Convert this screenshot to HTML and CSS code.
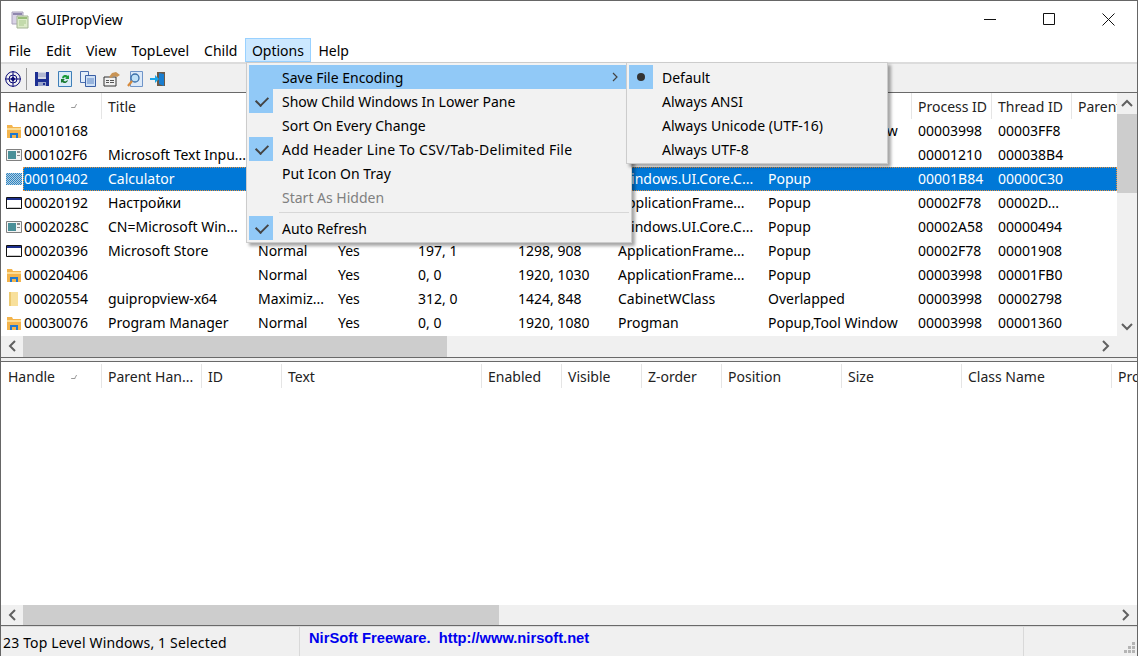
FILE: index.html
```html
<!DOCTYPE html>
<html>

<head>
    <title>GUIPropView</title>
    <meta name="viewport" content="width=device-width, initial-scale=1.0">
    <link rel="stylesheet" href="styles.css">
</head>

<body>
    <svg class="defs" width="0" height="0">
        <defs>
            <pattern id="dots" width="2" height="2" patternUnits="userSpaceOnUse">
                <rect width="2" height="2" fill="#2a86c8"/>
                <rect width="1" height="1" fill="#b9cfdd"/>
                <rect x="1" y="1" width="1" height="1" fill="#b9cfdd"/>
            </pattern>
        </defs>
        <symbol id="i-folder" viewBox="0 0 16 16">
            <path d="M1 2h5l1 2h8v11H1z" fill="#f3b44c"/>
            <path d="M1 5h14v2H1z" fill="#fbdc94"/>
            <path d="M4 15v-5h8v5h-2v-3H6v3z" fill="#1e78d0"/>
        </symbol>
        <symbol id="i-folder-pale" viewBox="0 0 16 16">
            <path d="M3 1h9v14H3z" fill="#f8e09c"/>
            <path d="M3 1h2v14H3z" fill="#ecc970"/>
        </symbol>
        <symbol id="i-app" viewBox="0 0 16 16">
            <path d="M.5 2.500h15v11H.5z" fill="#f4f4f4" stroke="#808080"/>
            <path d="M2 4h8v8H2z" fill="#4a8f98"/>
            <path d="M11 4h3v2h-3zM11 8h3v1h-3z" fill="#8a8a8a"/>
        </symbol>
        <symbol id="i-win" viewBox="0 0 16 16">
            <path d="M.5 2.500h15v11H.5z" fill="#fff" stroke="#111"/>
            <path d="M1 3h14v2H1z" fill="#1c2f8c"/>
            <path d="M2 12h12v1H2z" fill="#c8c8c8"/>
        </symbol>
        <symbol id="i-dither" viewBox="0 0 16 16">
            <path d="M0 2h16v12H0z" fill="url(#dots)"/>
        </symbol>
    </svg>

    <div class="window">
        <div class="titlebar">
            <svg class="app-icon" width="18" height="18" viewBox="0 0 18 18">
                <path d="M1 1h11v12H1z" fill="#d9d3e6" stroke="#a9a2bb"/>
                <path d="M2 2h9v2H2z" fill="#8f86ad"/>
                <path d="M6 5h11v12H6z" fill="#dcebc8" stroke="#a3b394"/>
                <path d="M7 6h9v2H7z" fill="#98bd78"/>
                <path d="M8 10h7M8 12h7M8 14h5" stroke="#a9c98e"/>
            </svg>
            <span class="title">GUIPropView</span>
            <div class="win-controls">
                <svg width="13" height="13" viewBox="0 0 13 13"><path d="M0 6.500h12" stroke="#111"/></svg>
                <svg width="13" height="13" viewBox="0 0 13 13"><path d="M.5.500h11v11H.5z" fill="none" stroke="#111"/></svg>
                <svg width="13" height="13" viewBox="0 0 13 13"><path d="M.5.500l12 12M12.500.500l-12 12" stroke="#111"/></svg>
            </div>
        </div>

        <div class="menubar">
            <span class="menu-item">File</span>
            <span class="menu-item">Edit</span>
            <span class="menu-item">View</span>
            <span class="menu-item">TopLevel</span>
            <span class="menu-item">Child</span>
            <span class="menu-item active">Options</span>
            <span class="menu-item">Help</span>
        </div>

        <div class="toolbar">
            <svg class="tool" width="16" height="16" viewBox="0 0 16 16" fill="none" stroke="#0a0a78">
                <circle cx="8" cy="8" r="7.300"/><circle cx="8" cy="8" r="4"/>
                <path d="M8 0v16M0 8h16"/><circle cx="8" cy="8" r="1.500" fill="#0a0a78"/>
            </svg>
            <span class="tool-sep"></span>
            <svg class="tool" width="16" height="16" viewBox="0 0 16 16">
                <path d="M1 1h14v14H1z" fill="#1d2f92"/>
                <path d="M4 1h8v7H4z" fill="#d5d8e6"/>
                <path d="M4 3h8M4 5h8" stroke="#8d96bd"/>
                <path d="M4 11h8v4H4z" fill="#9aa4c9"/>
                <path d="M9 12h2v2H9z" fill="#1d2f92"/>
            </svg>
            <svg class="tool" width="16" height="16" viewBox="0 0 16 16">
                <path d="M1.500.500h13v15h-13z" fill="#dcecf8" stroke="#3f7fb8"/>
                <path d="M5 7a3.500 3.500 0 0 1 6-2l1-1v4H8l1.500-1.300A2 2 0 0 0 6.500 7.500z" fill="#1a9a3a"/>
                <path d="M11 9a3.500 3.500 0 0 1-6 2l-1 1V8h4l-1.500 1.300a2 2 0 0 0 3 .5z" fill="#1a7a30"/>
            </svg>
            <svg class="tool" width="16" height="16" viewBox="0 0 16 16">
                <path d="M.5.500h8v11h-8z" fill="#e4eefa" stroke="#4a6fb0"/>
                <path d="M5.500 4.500h10v11h-10z" fill="#cfe0f5" stroke="#3a5fa5"/>
                <path d="M7 8h7M7 10h7M7 12h7" stroke="#5f86c4"/>
            </svg>
            <svg class="tool" width="17" height="16" viewBox="0 0 17 16">
                <path d="M1 6h12v9H1z" fill="#f1f1f1" stroke="#333"/>
                <path d="M3 9h3v1H3zM3 11h3v1H3zM7 9h4v1H7zM7 11h4v1H7z" fill="#555"/>
                <path d="M6 6l3-4 4-1 4 3-3 2-3-1-3 2z" fill="#c99455"/>
            </svg>
            <svg class="tool" width="16" height="16" viewBox="0 0 16 16">
                <path d="M3.500.500h12v15h-12z" fill="#dce9f8" stroke="#6f94c8"/>
                <circle cx="8" cy="7" r="4" fill="#bfe0f7" stroke="#3a6ea8" stroke-width="1.300"/>
                <path d="M5 10l-4 5" stroke="#d68a3c" stroke-width="2.200"/>
            </svg>
            <svg class="tool" width="16" height="16" viewBox="0 0 16 16">
                <path d="M7 1h8v14H7z" fill="#6b5a48"/>
                <path d="M9 2l5 1v12l-5-2z" fill="#1a7ed0"/>
                <path d="M0 7h5V4l4 4-4 4V9H0z" fill="#1ca6ea"/>
            </svg>
        </div>

        <div class="pane pane-top">
            <div class="list">
                <div class="list-head cols-top">
                    <span class="head-cell">Handle<i class="sort-mark"></i></span>
                    <span class="head-cell">Title</span>
                    <span class="head-cell"></span>
                    <span class="head-cell"></span>
                    <span class="head-cell"></span>
                    <span class="head-cell"></span>
                    <span class="head-cell"></span>
                    <span class="head-cell"></span>
                    <span class="head-cell">Process ID</span>
                    <span class="head-cell">Thread ID</span>
                    <span class="head-cell">Parent</span>
                </div>
                <div class="rows">
                    <div class="row">
                        <svg class="row-icon" width="16" height="16"><use href="#i-folder"/></svg>
                        <div class="cells cols-top-body"><span>00010168</span><span></span><span></span><span></span><span></span><span></span><span></span><span>Popup,Tool Window</span><span>00003998</span><span>00003FF8</span></div>
                    </div>
                    <div class="row">
                        <svg class="row-icon" width="16" height="16"><use href="#i-app"/></svg>
                        <div class="cells cols-top-body"><span>000102F6</span><span>Microsoft Text Inpu...</span><span></span><span></span><span></span><span></span><span></span><span></span><span>00001210</span><span>000038B4</span></div>
                    </div>
                    <div class="row selected">
                        <svg class="row-icon" width="16" height="16"><use href="#i-dither"/></svg>
                        <div class="cells cols-top-body"><span>00010402</span><span>Calculator</span><span></span><span></span><span></span><span></span><span>Windows.UI.Core.C...</span><span>Popup</span><span>00001B84</span><span>00000C30</span></div>
                    </div>
                    <div class="row">
                        <svg class="row-icon" width="16" height="16"><use href="#i-win"/></svg>
                        <div class="cells cols-top-body"><span>00020192</span><span>Настройки</span><span></span><span></span><span></span><span></span><span>ApplicationFrame...</span><span>Popup</span><span>00002F78</span><span>00002D...</span></div>
                    </div>
                    <div class="row">
                        <svg class="row-icon" width="16" height="16"><use href="#i-app"/></svg>
                        <div class="cells cols-top-body"><span>0002028C</span><span>CN=Microsoft Win...</span><span></span><span></span><span></span><span></span><span>Windows.UI.Core.C...</span><span>Popup</span><span>00002A58</span><span>00000494</span></div>
                    </div>
                    <div class="row">
                        <svg class="row-icon" width="16" height="16"><use href="#i-win"/></svg>
                        <div class="cells cols-top-body"><span>00020396</span><span>Microsoft Store</span><span>Normal</span><span>Yes</span><span>197, 1</span><span>1298, 908</span><span>ApplicationFrame...</span><span>Popup</span><span>00002F78</span><span>00001908</span></div>
                    </div>
                    <div class="row">
                        <svg class="row-icon" width="16" height="16"><use href="#i-folder"/></svg>
                        <div class="cells cols-top-body"><span>00020406</span><span></span><span>Normal</span><span>Yes</span><span>0, 0</span><span>1920, 1030</span><span>ApplicationFrame...</span><span>Popup</span><span>00003998</span><span>00001FB0</span></div>
                    </div>
                    <div class="row">
                        <svg class="row-icon" width="16" height="16"><use href="#i-folder-pale"/></svg>
                        <div class="cells cols-top-body"><span>00020554</span><span>guipropview-x64</span><span>Maximiz...</span><span>Yes</span><span>312, 0</span><span>1424, 848</span><span>CabinetWClass</span><span>Overlapped</span><span>00003998</span><span>00002798</span></div>
                    </div>
                    <div class="row">
                        <svg class="row-icon" width="16" height="16"><use href="#i-folder"/></svg>
                        <div class="cells cols-top-body"><span>00030076</span><span>Program Manager</span><span>Normal</span><span>Yes</span><span>0, 0</span><span>1920, 1080</span><span>Progman</span><span>Popup,Tool Window</span><span>00003998</span><span>00001360</span></div>
                    </div>
                </div>
            </div>
            <div class="vscroll">
                <svg class="sb-btn" width="20" height="21" viewBox="0 0 20 21"><path d="M5 13l5-5 5 5" fill="none" stroke="#606060" stroke-width="2"/></svg>
                <div class="vthumb"></div>
                <div class="sb-fill"></div>
                <svg class="sb-btn" width="20" height="21" viewBox="0 0 20 21"><path d="M5 9l5 5 5-5" fill="none" stroke="#606060" stroke-width="2"/></svg>
            </div>
            <div class="hscroll">
                <svg class="sb-btn" width="22" height="20" viewBox="0 0 22 20"><path d="M14 5l-5 5 5 5" fill="none" stroke="#606060" stroke-width="2"/></svg>
                <div class="hthumb hthumb-top"></div>
                <div class="sb-fill"></div>
                <svg class="sb-btn" width="21" height="20" viewBox="0 0 21 20"><path d="M7 5l5 5-5 5" fill="none" stroke="#606060" stroke-width="2"/></svg>
            </div>
            <div class="corner"></div>
        </div>

        <div class="splitter"></div>

        <div class="pane pane-bottom">
            <div class="list">
                <div class="list-head cols-bottom">
                    <span class="head-cell">Handle<i class="sort-mark"></i></span>
                    <span class="head-cell">Parent Han...</span>
                    <span class="head-cell">ID</span>
                    <span class="head-cell">Text</span>
                    <span class="head-cell">Enabled</span>
                    <span class="head-cell">Visible</span>
                    <span class="head-cell">Z-order</span>
                    <span class="head-cell">Position</span>
                    <span class="head-cell">Size</span>
                    <span class="head-cell">Class Name</span>
                    <span class="head-cell">Process ID</span>
                </div>
            </div>
            <div class="hscroll">
                <svg class="sb-btn" width="22" height="20" viewBox="0 0 22 20"><path d="M14 5l-5 5 5 5" fill="none" stroke="#606060" stroke-width="2"/></svg>
                <div class="hthumb hthumb-bottom"></div>
                <div class="sb-fill"></div>
                <svg class="sb-btn" width="21" height="20" viewBox="0 0 21 20"><path d="M7 5l5 5-5 5" fill="none" stroke="#606060" stroke-width="2"/></svg>
            </div>
        </div>

        <div class="statusbar">
            <div class="status-count">23 Top Level Windows, 1 Selected</div>
            <div class="status-link">NirSoft Freeware.&nbsp; http://www.nirsoft.net</div>
            <div class="status-grip">
                <svg width="12" height="12" viewBox="0 0 12 12" fill="#b5b5b5"><path d="M9 0h3v3H9zM5 4h3v3H5zM9 4h3v3H9zM1 8h3v3H1zM5 8h3v3H5zM9 8h3v3H9z"/></svg>
            </div>
        </div>

        <!-- open menus -->
        <div class="popup options-menu">
            <div class="pop-item current">Save File Encoding
                <svg class="pop-arrow" width="7" height="10" viewBox="0 0 7 10"><path d="M1 1l4 4-4 4" fill="none" stroke="#444" stroke-width="1.200"/></svg>
            </div>
            <div class="pop-item checked">Show Child Windows In Lower Pane</div>
            <div class="pop-item">Sort On Every Change</div>
            <div class="pop-item checked wide">Add Header Line To CSV/Tab-Delimited File</div>
            <div class="pop-item">Put Icon On Tray</div>
            <div class="pop-item disabled">Start As Hidden</div>
            <div class="pop-sep"></div>
            <div class="pop-item checked">Auto Refresh</div>
        </div>
        <div class="popup encoding-menu">
            <div class="pop-item radio">Default</div>
            <div class="pop-item">Always ANSI</div>
            <div class="pop-item">Always Unicode (UTF-16)</div>
            <div class="pop-item">Always UTF-8</div>
        </div>
    </div>
</body>
</html>
```

FILE: styles.css
```css
* {
    box-sizing: border-box;
}

html,
body {
    margin: 0;
    height: 100%;
    overflow: hidden;
}

body {
    font-family: "Noto Sans", sans-serif;
    font-size: 14px;
    color: #000;
    background-color: #fff;
}

.defs {
    position: absolute;
}

.window {
    position: relative;
    display: flex;
    flex-direction: column;
    height: 656px;
    border: 1px solid #666;
    border-bottom: none;
    background-color: #fff;
}

.titlebar {
    display: flex;
    align-items: center;
    height: 37px;
    padding-left: 10px;
}

.title {
    margin-left: 7px;
}

.win-controls {
    display: flex;
    gap: 46px;
    margin-left: auto;
    margin-right: 22px;
}

.menubar {
    display: flex;
    height: 24px;
}

.menu-item {
    display: flex;
    align-items: center;
    padding: 0 6.5px;
    border: 1px solid transparent;
}

.menu-item.active {
    padding: 0 6px;
    background-color: #cce8ff;
    border-color: #99d1ff;
}

.toolbar {
    display: flex;
    align-items: center;
    height: 30px;
    padding: 2px 0 0 4px;
    border-top: 2px solid #dcdcdc;
    background-color: #f0f0f0;
}

.tool {
    margin-right: 7px;
}

.tool-sep {
    width: 1px;
    height: 22px;
    margin: 0 7px 0 -2px;
    background-color: #999;
}

.pane {
    display: grid;
    height: 266px;
    border-top: 1px solid #696969;
    border-bottom: 1px solid #696969;
    grid-template-columns: 1fr 20px;
    grid-template-rows: 1fr 21px;
    overflow: hidden;
}

.pane-bottom {
    height: 265px;
    grid-template-columns: 1fr;
    grid-template-rows: 1fr 20px;
}

.pane-bottom .list-head {
    padding-top: 2px;
}

.splitter {
    height: 3px;
    background-color: #f0f0f0;
}

.list {
    min-width: 0;
    overflow: hidden;
}

.list-head {
    display: grid;
    height: 26px;
    padding-left: 1px;
}

.cols-top {
    grid-template-columns: 100px 150px 80px 80px 100px 100px 150px 150px 80px 80px 80px;
}

.cols-bottom {
    grid-template-columns: 100px 100px 80px 200px 80px 80px 80px 120px 120px 150px 80px;
}

.cols-top-body {
    grid-template-columns: 79px 150px 80px 80px 100px 100px 150px 150px 80px 80px 80px;
}

.head-cell {
    position: relative;
    display: flex;
    align-items: center;
    padding-left: 6px;
    white-space: nowrap;
    overflow: hidden;
    color: #222;
    border-right: 1px solid #e5e5e5;
}

.sort-mark {
    position: absolute;
    left: 70px;
    top: 11px;
    width: 4px;
    height: 4px;
    border-right: 1px solid #999;
    border-bottom: 1px solid #999;
    transform: skewX(-30deg);
}

.row {
    display: flex;
    align-items: center;
    height: 24px;
}

.row-icon {
    flex: none;
    margin: 0 1px 0 5px;
}

.cells {
    display: grid;
    flex: 1;
    height: 24px;
    padding-bottom: 1px;
    align-items: center;
    white-space: nowrap;
    overflow: hidden;
}

.cells span {
    padding-left: 6px;
    overflow: hidden;
}

.cells span:first-child {
    padding-left: 1px;
}

.row.selected .cells {
    color: #fff;
    background-color: #0078d7;
    outline: 1px dotted #e8903a;
    outline-offset: -1px;
}

.vscroll,
.hscroll {
    display: flex;
    background-color: #f0f0f0;
}

.vscroll {
    flex-direction: column;
}

.sb-btn {
    flex: none;
}

.sb-fill {
    flex: 1;
}

.vthumb {
    height: 79px;
    background-color: #cdcdcd;
}

.hthumb {
    background-color: #cdcdcd;
}

.hthumb-top {
    width: 424px;
}

.hthumb-bottom {
    width: 476px;
}

.corner {
    background-color: #f0f0f0;
}

.statusbar {
    display: flex;
    flex: 1;
    border-top: 1px solid #dcdcdc;
    background-color: #f0f0f0;
}

.status-count {
    width: 299px;
    padding: 6px 0 0 2px;
    white-space: nowrap;
    letter-spacing: 0.16px;
    border-right: 1px solid #d9d9d9;
}

.status-link {
    width: 724px;
    padding: 3px 0 0 9px;
    font-family: "Liberation Sans", Arial, sans-serif;
    font-size: 14.7px;
    font-weight: bold;
    color: #0000ee;
    border-right: 1px solid #d9d9d9;
}

.status-grip {
    display: flex;
    flex: 1;
    align-items: flex-end;
    justify-content: flex-end;
    padding: 0 2px 2px 0;
}

.popup {
    position: absolute;
    padding: 2px;
    background-color: #f2f2f2;
    border: 1px solid #ccc;
    box-shadow: 3px 3px 3px rgba(0, 0, 0, 0.35);
}

.options-menu {
    left: 245px;
    top: 61px;
    width: 386px;
    height: 181px;
}

.encoding-menu {
    left: 625px;
    top: 61px;
    width: 262px;
    height: 102px;
}

.pop-item {
    position: relative;
    height: 24px;
    line-height: 25px;
    padding-left: 33px;
    white-space: nowrap;
}

.pop-item.wide {
    letter-spacing: 0.27px;
}

.pop-item::before {
    content: "";
    position: absolute;
    left: 0;
    top: 0;
    width: 24px;
    height: 24px;
}

.pop-item.current {
    background-color: #91c9f7;
}

.pop-item.checked::before,
.pop-item.radio::before {
    background-color: #91c9f7;
}

.pop-item.checked::after {
    content: "";
    position: absolute;
    left: 7px;
    top: 7px;
    width: 10px;
    height: 6px;
    border-left: 2px solid #444;
    border-bottom: 2px solid #444;
    transform: rotate(-45deg);
}

.pop-item.radio::after {
    content: "";
    position: absolute;
    left: 8px;
    top: 8px;
    width: 8px;
    height: 8px;
    border-radius: 50%;
    background-color: #333;
}

.pop-item.disabled {
    color: #808080;
}

.pop-arrow {
    position: absolute;
    right: 10px;
    top: 7px;
}

.pop-sep {
    height: 1px;
    margin: 3px 0 3px 30px;
    background-color: #d7d7d7;
}
```
